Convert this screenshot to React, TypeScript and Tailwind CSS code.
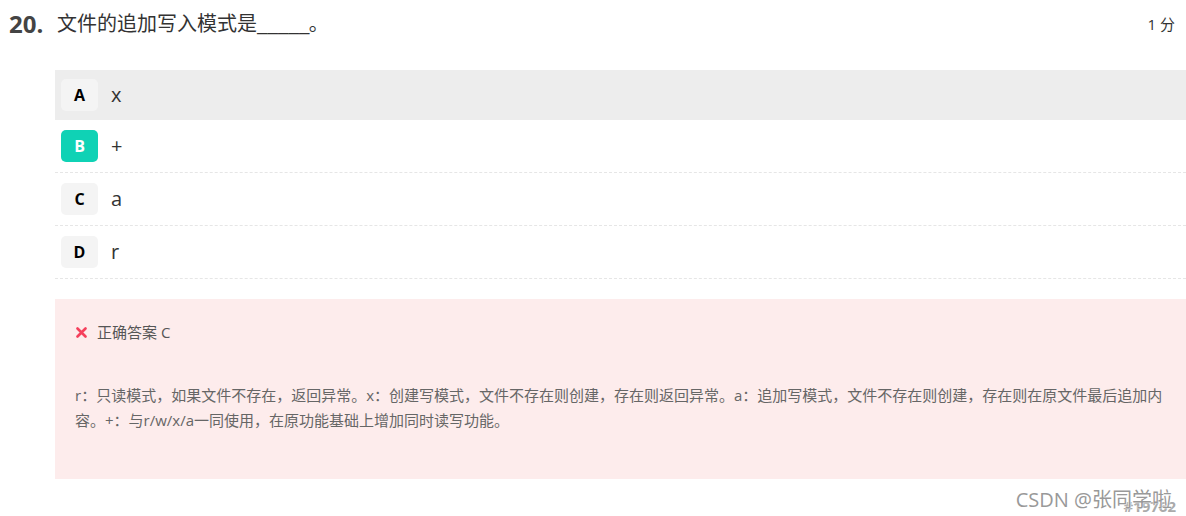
import React from 'react';

interface Option {
  key: string;
  text: string;
  hovered?: boolean;
  picked?: boolean;
}

const options: Option[] = [
  { key: 'A', text: 'x', hovered: true },
  { key: 'B', text: '+', picked: true },
  { key: 'C', text: 'a' },
  { key: 'D', text: 'r' },
];

const font = { fontFamily: '"Open Sans", "Noto Sans CJK SC", sans-serif' };

const OptionRow: React.FC<{ opt: Option }> = ({ opt }) => (
  <div
    className={
      opt.hovered
        ? 'flex items-center h-[50px] pl-[6px] bg-[#ededed]'
        : 'flex items-center h-[53px] pl-[6px] border-b border-dashed border-[#e6e6e6]'
    }
  >
    <span
      className={`flex items-center justify-center w-[37px] h-[32px] rounded-[5px] text-[16px] font-bold ${
        opt.picked ? 'bg-[#0fd2b5] text-white' : 'bg-[#f4f4f4] text-black'
      }`}
    >
      {opt.key}
    </span>
    <span className="ml-[13px] text-[20px] text-[#333] leading-none">{opt.text}</span>
  </div>
);

export default function App() {
  return (
    <div className="relative w-[1186px] h-[516px] bg-white overflow-hidden" style={font}>
      {/* question header */}
      <div className="flex items-center pl-[9px] pr-[11px] pt-[8px]">
        <span className="w-[48px] text-[24px] font-bold text-[#444] leading-[32px]">20.</span>
        <span className="flex-1 text-[20px] text-[#333] leading-[32px]">
          文件的追加写入模式是<span className="inline-block scale-x-[1.2] origin-left mr-[8px]">_____</span>。
        </span>
        <span className="text-[15px] text-[#333]">1 分</span>
      </div>

      <div className="ml-[55px] mt-[30px]">
        {options.map((o) => (
          <OptionRow key={o.key} opt={o} />
        ))}

        {/* answer analysis */}
        <div className="mt-[20px] h-[180px] bg-[#fdecec] px-[20px] pt-[22px]">
          <div className="flex items-center h-[22px]">
            <svg width="11" height="11" viewBox="0 0 11 11" className="ml-[1px]">
              <path d="M1.5 1.5 L9.5 9.5 M9.5 1.5 L1.5 9.5" stroke="#f5405c" strokeWidth="2.6" strokeLinecap="round" />
            </svg>
            <span className="ml-[10px] text-[15px] text-[#555]">正确答案 C</span>
          </div>
          <p className="mt-[40px] text-[15px] leading-[25px] text-[#666] whitespace-nowrap">
            r：只读模式，如果文件不存在，返回异常。x：创建写模式，文件不存在则创建，存在则返回异常。a：追加写模式，文件不存在则创建，存在则在原文件最后追加内
            <br />
            容。+：与r/w/x/a一同使用，在原功能基础上增加同时读写功能。
          </p>
        </div>
      </div>

      {/* watermark */}
      <span className="absolute right-[10px] bottom-[2px] text-[15px] font-bold text-[#aaa] leading-none">#19762</span>
      <span
        className="absolute right-[14px] bottom-[6px] text-[20px] text-[#999] leading-none"
        style={{ textShadow: '0 0 2px #fff, 0 0 1px #fff' }}
      >
        CSDN @张同学啦
      </span>
    </div>
  );
}
